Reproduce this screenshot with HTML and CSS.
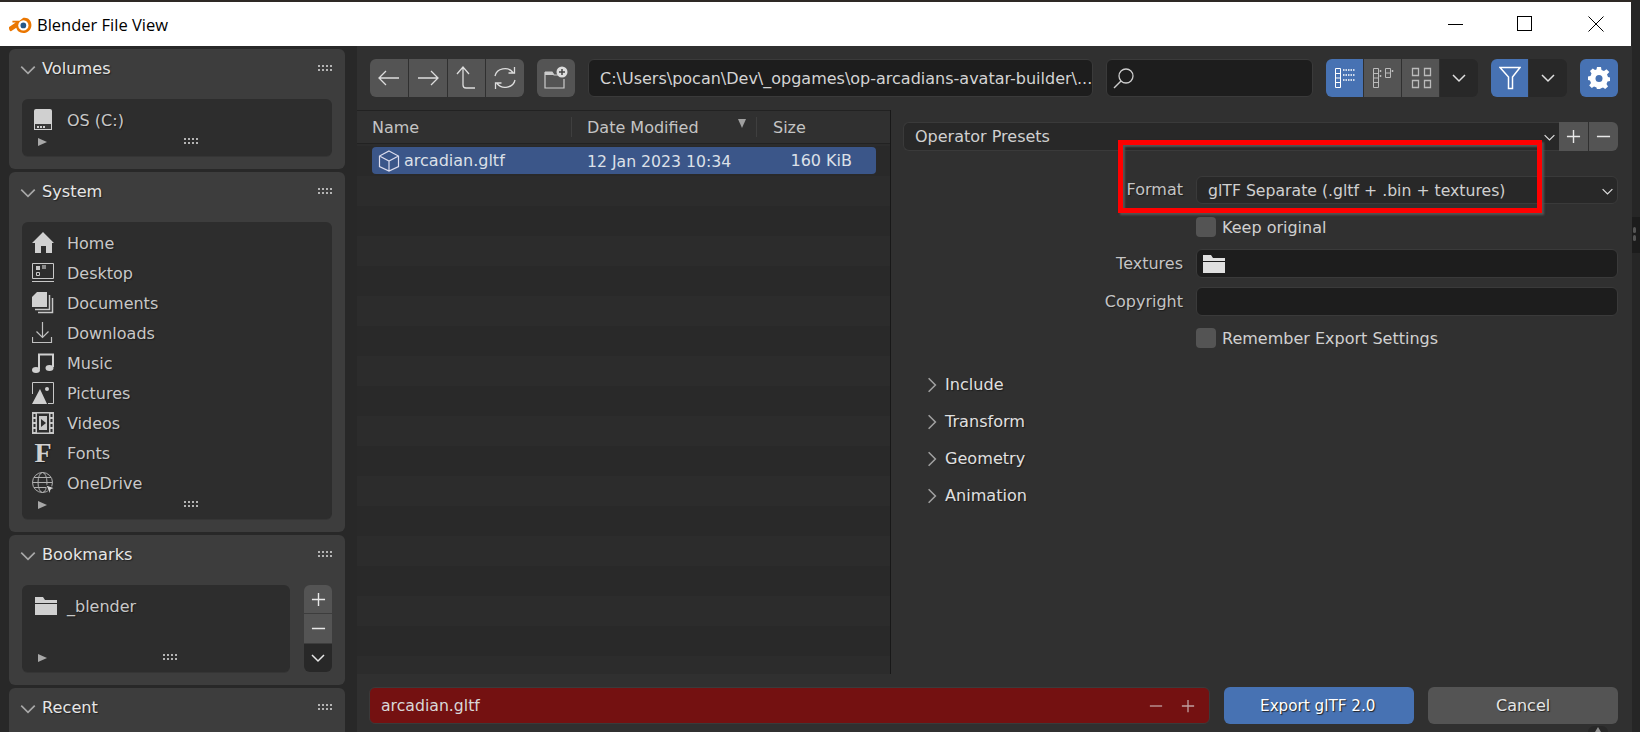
FILE: index.html
```html
<!DOCTYPE html>
<html lang="en">
<head>
	<meta charset="UTF-8">
	<title>Blender File View</title>
	<link rel="stylesheet" href="styles.css">
</head>
<body>
	<svg class="defs" width="0" height="0">
		<symbol id="chev-d" viewBox="0 0 16 16"><path d="M2 5l6 6 6-6" fill="none" stroke="currentColor" stroke-width="1.5"/></symbol>
		<symbol id="chev-r" viewBox="0 0 16 16"><path d="M5 2l6 6-6 6" fill="none" stroke="currentColor" stroke-width="1.4"/></symbol>
		<symbol id="plus" viewBox="0 0 16 16"><path d="M8 1v14M1 8h14" stroke="currentColor" stroke-width="1.5"/></symbol>
		<symbol id="minus" viewBox="0 0 16 16"><path d="M1 8h14" stroke="currentColor" stroke-width="1.5"/></symbol>
		<symbol id="folder" viewBox="0 0 22 18"><path d="M0 0h8l2 3h12v3H0zM0 7h22v11H0z" fill="currentColor"/></symbol>
	</svg>

	<div class="topstrip"></div>
	<header class="titlebar">
		<svg class="logo" viewBox="0 0 24 20">
			<path d="M0 12.5L7 8 3.5 7.8 3.5 6H11L15 3C19 2 23.5 5 23.5 10.5 23.5 15.5 19.5 19 15 19 11 19 8.2 16.5 7.6 13.5L2 17C.5 17.5-.5 14 0 12.5z" fill="#ea7600"/>
			<circle cx="15" cy="11" r="5.4" fill="#fff"/>
			<circle cx="15" cy="11" r="3" fill="#265787"/>
		</svg>
		<span class="title">Blender File View</span>
		<div class="win-btns">
			<div class="win-btn"><svg width="16" height="16"><path d="M0 8.5h15" stroke="#000"/></svg></div>
			<div class="win-btn"><svg class="win-max" width="16" height="16"><rect x=".5" y=".5" width="14" height="14" fill="none" stroke="#000"/></svg></div>
			<div class="win-btn"><svg width="16" height="16"><path d="M.5.5l15 15M15.5.5l-15 15" stroke="#000"/></svg></div>
		</div>
	</header>

	<div class="app">
		<aside class="sidebar">
			<section class="panel">
				<div class="panel-head"><svg class="chev"><use href="#chev-d"/></svg><span>Volumes</span><i class="grip"></i></div>
				<div class="list">
					<div class="place">
						<svg class="ico" viewBox="0 0 22 22"><g transform="translate(2 0)"><path d="M2 0h14a2 2 0 0 1 2 2v19H0V2a2 2 0 0 1 2-2z" fill="#d0d0d0"/><path d="M1 15h16v5H1z" fill="#3a3a3a"/><path d="M3 17h2v2H3zM6 17h2v2H6zM9 17h2v2H9z" fill="#d0d0d0"/></g></svg>
						OS (C:)
					</div>
					<div class="list-foot"><i class="tri"></i><i class="grip"></i></div>
				</div>
			</section>

			<section class="panel">
				<div class="panel-head"><svg class="chev"><use href="#chev-d"/></svg><span>System</span><i class="grip"></i></div>
				<div class="list">
					<div class="place">
						<svg class="ico" viewBox="0 0 22 22"><path d="M11 0l11 11h-2v10h-6v-7H9v7H3V11H0z" fill="#d0d0d0"/></svg>
						Home
					</div>
					<div class="place">
						<svg class="ico" viewBox="0 0 22 22"><path d="M.5 1.500h21v15H.5zM0 19.500h22" fill="none" stroke="#c8c8c8"/><path d="M4 4h4v4H4z" fill="#c8c8c8"/><path d="M10 3h4v4h-4z" fill="#8a8a8a"/><path d="M4.500 10.500h3v3h-3z" fill="none" stroke="#c8c8c8"/></svg>
						Desktop
					</div>
					<div class="place">
						<svg class="ico" viewBox="0 0 22 22"><path d="M5 0h10v15H0V5z" fill="#d0d0d0"/><path d="M17.500 3v14.500H3M20.500 6v14.500H6" fill="none" stroke="#c8c8c8" stroke-width="1.500"/></svg>
						Documents
					</div>
					<div class="place">
						<svg class="ico" viewBox="0 0 22 22"><path d="M10.500 0v15M4.500 9.500l6 6 6-6M.5 15v5.500h19V15" fill="none" stroke="#c0c0c0" stroke-width="1.200"/></svg>
						Downloads
					</div>
					<div class="place">
						<svg class="ico" viewBox="0 0 22 22"><path d="M7 17V2.500h14V15" fill="none" stroke="#d0d0d0" stroke-width="2"/><ellipse cx="4" cy="18" rx="4" ry="3" fill="#d0d0d0"/><ellipse cx="17.500" cy="16" rx="4" ry="3" fill="#d0d0d0"/></svg>
						Music
					</div>
					<div class="place">
						<svg class="ico" viewBox="0 0 22 22"><path d="M.5 12V.5h21v21H16" fill="none" stroke="#c8c8c8"/><path d="M8 7l7 15H0z" fill="#d0d0d0"/><circle cx="15" cy="7" r="2" fill="#d0d0d0"/></svg>
						Pictures
					</div>
					<div class="place">
						<svg class="ico" viewBox="0 0 22 22"><path d="M0 0h22v22H0z" fill="#c8c8c8"/><path d="M5 1.500h12v19H5z" fill="#2d2d2d"/><path d="M1.500 2h2v3h-2zM1.500 7h2v3h-2zM1.500 12h2v3h-2zM1.500 17h2v3h-2zM18.500 2h2v3h-2zM18.500 7h2v3h-2zM18.500 12h2v3h-2zM18.500 17h2v3h-2z" fill="#2d2d2d"/><path d="M7 4h8v14H7z" fill="#c8c8c8"/><path d="M9 7l5 4-5 4z" fill="#2d2d2d"/></svg>
						Videos
					</div>
					<div class="place">
						<span class="font-ico">F</span>
						Fonts
					</div>
					<div class="place">
						<svg class="ico" viewBox="0 0 22 22"><g fill="none" stroke="#b0b0b0"><circle cx="10.500" cy="10.500" r="10"/><ellipse cx="10.500" cy="10.500" rx="4.500" ry="10"/><path d="M.5 10.500h20M2 5.500h17M2 15.500h17"/></g><path d="M14 13l9 3-4 1.500-1.500 4.500z" fill="#d0d0d0" stroke="#2d2d2d"/></svg>
						OneDrive
					</div>
					<div class="list-foot"><i class="tri"></i><i class="grip"></i></div>
				</div>
			</section>

			<section class="panel">
				<div class="panel-head"><svg class="chev"><use href="#chev-d"/></svg><span>Bookmarks</span><i class="grip"></i></div>
				<div class="bookmarks">
					<div class="list">
						<div class="place">
							<svg class="ico bm-ico"><use href="#folder"/></svg>
							_blender
						</div>
						<div class="place"></div>
						<div class="list-foot"><i class="tri"></i><i class="grip"></i></div>
					</div>
					<div class="side-btns">
						<div class="side-btn"><svg width="15" height="15"><use href="#plus"/></svg></div>
						<div class="side-btn"><svg width="15" height="15"><use href="#minus"/></svg></div>
						<div class="side-btn side-btn-dark"><svg width="16" height="16"><use href="#chev-d"/></svg></div>
					</div>
				</div>
			</section>

			<section class="panel">
				<div class="panel-head"><svg class="chev"><use href="#chev-d"/></svg><span>Recent</span><i class="grip"></i></div>
			</section>
		</aside>

		<main class="main">
			<div class="toolbar">
				<div class="btn-group">
					<div class="tool tool-nav"><svg width="22" height="22" viewBox="0 0 22 22"><path d="M21 11H1M8 4l-7 7 7 7" fill="none" stroke="#ddd" stroke-width="1.300"/></svg></div>
					<div class="tool tool-nav"><svg width="22" height="22" viewBox="0 0 22 22"><path d="M1 11h20M14 4l7 7-7 7" fill="none" stroke="#ddd" stroke-width="1.300"/></svg></div>
					<div class="tool tool-nav"><svg width="22" height="24" viewBox="0 0 22 24"><path d="M20 22h-9a3 3 0 0 1-3-3V2M2 8l6-7 6 7" fill="none" stroke="#ddd" stroke-width="1.300"/></svg></div>
					<div class="tool tool-nav"><svg width="24" height="24" viewBox="0 0 24 24"><path d="M2 10A10 9 0 0 1 20 6.500M22 14A10 9 0 0 1 4 17.500M21.500 1v6h-6M2.500 23v-6h6" fill="none" stroke="#ddd" stroke-width="1.300"/></svg></div>
				</div>
				<div class="tool tool-solo"><svg width="24" height="24" viewBox="0 0 24 24"><path d="M1 6h7l2 3h6M1 6v16h19V13" fill="none" stroke="#ccc" stroke-width="1.200"/><path d="M1 6h7l2 3H1z" fill="#ccc"/><circle cx="18" cy="6" r="5.500" fill="#ddd"/><path d="M18 3v6M15 6h6" stroke="#444" stroke-width="1.500"/></svg></div>
				<div class="field path">C:\Users\pocan\Dev\_opgames\op-arcadians-avatar-builder\...</div>
				<div class="field search"><svg width="22" height="22" viewBox="0 0 22 22"><circle cx="13" cy="9" r="7" fill="none" stroke="#ccc" stroke-width="1.300"/><path d="M8 14l-7 7" stroke="#ccc" stroke-width="1.500"/></svg></div>
				<div class="btn-group">
					<div class="tool tool-blue"><svg width="22" height="22" viewBox="0 0 22 22"><path d="M1.500 1.500h5v19h-5zM1.500 6.500h5M1.500 11h5M1.500 15.500h5" fill="none" stroke="#fff"/><path d="M9 3h12M9 8h12M9 13h12" stroke="#fff" stroke-width="1.500" stroke-dasharray="1.500 1"/></svg></div>
					<div class="tool"><svg width="22" height="22" viewBox="0 0 22 22"><path d="M1.500 1.500h5v19h-5zM1.500 6.500h5M1.500 11h5M1.500 15.500h5M13.500 1.500h5v9h-5zM13.500 6h5" fill="none" stroke="#bbb"/><path d="M8.500 3v2M8.500 8v2M20.500 3v2" stroke="#bbb" stroke-width="1.500"/></svg></div>
					<div class="tool"><svg width="22" height="22" viewBox="0 0 22 22"><path d="M2.500 1.500h6v7h-6zM14.500 1.500h6v7h-6zM2.500 13.500h6v7h-6zM14.500 13.500h6v7h-6z" fill="none" stroke="#bbb" stroke-width="1.300"/></svg></div>
					<div class="tool tool-dark"><svg width="16" height="16"><use href="#chev-d"/></svg></div>
				</div>
				<div class="btn-group">
					<div class="tool tool-blue"><svg width="22" height="24" viewBox="0 0 22 24"><path d="M1 1.500h20l-7.500 9.500v11.500H9.500V11z" fill="none" stroke="#fff" stroke-width="1.500"/></svg></div>
					<div class="tool tool-dark"><svg width="16" height="16"><use href="#chev-d"/></svg></div>
				</div>
				<div class="tool tool-blue tool-solo tool-gear"><svg width="22" height="22" viewBox="0 0 22 22"><path d="M9 0h4l.5 3 2.500 1 2.500-1.800 2.800 2.800L19 7.500 20 10l2 .5v3.500L19.500 14.500l-1 2.500 1.500 2.500-2.800 2.500-2.200-1.500-2.500 1-.5 1H9l-.5-2-2.500-1L3.800 21 1.200 18.500 3 16 2 13.500 0 13V9.500l2.500-.5L3.500 6.500 2 4l2.800-2.500L7 3l1.500-.5z" fill="#fff"/><circle cx="11" cy="11.500" r="3.500" fill="#4772b3"/></svg></div>
			</div>

			<div class="content">
				<div class="files">
					<div class="file-head">
						<span class="col-name">Name</span>
						<span class="col-date">Date Modified<i class="tri-down"></i></span>
						<span class="col-size">Size</span>
					</div>
					<div class="file-rows">
						<div class="file selected">
							<span class="col-name"><svg width="22" height="22" viewBox="0 0 22 22"><path d="M11 1l9.500 5v10.500L11 21l-9.500-4.500V6zM1.500 6l9.500 5 9.500-5M11 11v10" fill="none" stroke="#dde" stroke-width="1.200"/></svg>arcadian.gltf</span>
							<span class="col-date">12 Jan 2023 10:34</span>
							<span class="col-size">160 KiB</span>
						</div>
					</div>
				</div>

				<div class="props">
					<div class="presets">
						<div class="select preset-field">Operator Presets<svg class="sel-chev"><use href="#chev-d"/></svg></div>
						<div class="pair">
							<div class="pair-btn"><svg width="15" height="15"><use href="#plus"/></svg></div>
							<div class="pair-btn"><svg width="15" height="15"><use href="#minus"/></svg></div>
						</div>
					</div>
					<div class="form">
						<label class="row-label">Format</label>
						<div class="select select-format">glTF Separate (.gltf + .bin + textures)<svg class="sel-chev"><use href="#chev-d"/></svg></div>
						<span></span>
						<div class="check"><i></i>Keep original</div>
						<label class="row-label row-label-low">Textures</label>
						<div class="input"><svg width="22" height="18"><use href="#folder"/></svg></div>
						<label class="row-label row-label-low">Copyright</label>
						<div class="input"></div>
						<span></span>
						<div class="check check-last"><i></i>Remember Export Settings</div>
					</div>
					<ul class="subpanels">
						<li><svg width="18" height="18"><use href="#chev-r"/></svg>Include</li>
						<li><svg width="18" height="18"><use href="#chev-r"/></svg>Transform</li>
						<li><svg width="18" height="18"><use href="#chev-r"/></svg>Geometry</li>
						<li><svg width="18" height="18"><use href="#chev-r"/></svg>Animation</li>
					</ul>
				</div>
			</div>

			<div class="footer">
				<div class="name-field">arcadian.gltf
					<svg class="nf-minus" width="14" height="14"><use href="#minus"/></svg>
					<svg width="14" height="14"><use href="#plus"/></svg>
				</div>
				<div class="action action-blue">Export glTF 2.0</div>
				<div class="action">Cancel</div>
			</div>

			<div class="redbox"></div>
			<div class="corner-tab"><i></i></div>
		</main>
	</div>
	<div class="edge-scrap"><i></i><i></i></div>
</body>
</html>
```

FILE: styles.css
```css
*{margin: 0;padding: 0;box-sizing: border-box;}
ul{list-style: none;}
i{display: block;}
html,body{width: 1640px;height: 732px;overflow: hidden;}
body{background: #262626;font-family: 'DejaVu Sans', sans-serif;font-size: 16px;color: #d0d0d0;position: relative;}
.defs{position: absolute;}

.topstrip{width: 1632px;height: 2px;background: #2e2925;}
.titlebar{width: 1631px;height: 44px;background: #fff;display: flex;align-items: center;padding-left: 9px;color: #000;}
.logo{width: 23px;height: 19px;margin-right: 5px;margin-top: 1px;}
.title{font-family: 'Open Sans', sans-serif;font-size: 16.5px;}
.win-btns{display: flex;margin-left: auto;}
.win-btn{width: 70px;height: 44px;display: flex;align-items: center;justify-content: center;}
.win-max{margin-right: 2px;}

.app{display: flex;width: 1632px;height: 686px;}

/* left column */
.sidebar{width: 357px;height: 686px;background: #282828;padding: 3px 12px 0 9px;display: flex;flex-direction: column;gap: 3px;overflow: hidden;flex: none;}
.panel{background: #3d3d3d;border-radius: 6px;padding: 0 13px 13px;flex: none;}
.panel-head{height: 50px;display: flex;align-items: flex-start;padding-top: 8px;color: #e6e6e6;font-size: 16.2px;text-shadow: 1px 1px 1px #222;}
.panel-head span{margin-left: 5px;line-height: 24px;}
.panel-head .grip{margin: 8px -2px 0 auto;}
.chev{width: 18px;height: 18px;color: #a8a8a8;margin-top: 4px;margin-left: -3px;flex: none;}
.grip{width: 16px;height: 8px;background: radial-gradient(circle at 1px 1px, #b4b4b4 1px, transparent 1.2px) 0 0/4px 4px;flex: none;}
.list{background: #2d2d2d;border-radius: 6px;padding-top: 6px;box-shadow: 0 1px 0 #353535;}
.place{height: 30px;display: flex;align-items: center;padding-left: 10px;gap: 13px;color: #c8c8c8;font-size: 16px;text-shadow: 1px 1px 1px #1c1c1c;}
.ico{width: 22px;height: 22px;flex: none;}
.font-ico{width: 22px;text-align: center;font-family: 'Liberation Serif', serif;font-weight: bold;font-size: 28px;line-height: 22px;color: #d0d0d0;}
.bm-ico{width: 22px;height: 18px;color: #d0d0d0;margin-left: 3px;margin-right: -3px;}
.list-foot{height: 21px;display: flex;align-items: flex-start;padding: 3px 0 0 16px;}
.list-foot .grip{margin: 0 auto;position: relative;left: 2px;}
.tri{width: 0;height: 0;border-left: 9px solid #a8a8a8;border-top: 4px solid transparent;border-bottom: 4px solid transparent;flex: none;}
.bookmarks{display: flex;justify-content: space-between;}
.bookmarks .list{width: 268px;}
.side-btns{width: 28px;display: flex;flex-direction: column;gap: 1px;border-radius: 6px;overflow: hidden;}
.side-btn{flex: 1;background: #545454;display: flex;align-items: center;justify-content: center;color: #e8e8e8;}
.side-btn-dark{background: #282828;}

/* right side */
.main{flex: 1;min-width: 0;background: #303030;display: flex;flex-direction: column;position: relative;}
.toolbar{height: 64px;display: flex;padding: 13px 0 0 13px;gap: 13px;align-items: flex-start;}
.btn-group{display: flex;height: 38px;border-radius: 6px;overflow: hidden;gap: 1px;flex: none;}
.tool{width: 37px;height: 38px;background: #545454;display: flex;align-items: center;justify-content: center;color: #e0e0e0;flex: none;}
.tool-nav{width: 37.75px;}
.tool-solo{border-radius: 6px;width: 38px;}
.tool-blue{background: #4772b3;}
.tool-dark{background: #282828;width: 38px;}
.tool-gear{width: 38px;}
.field{height: 38px;background: #1d1d1d;border: 1px solid #3a3a3a;border-radius: 6px;display: flex;align-items: center;color: #d4d4d4;white-space: nowrap;overflow: hidden;flex: none;}
.path{width: 505px;padding-left: 11px;}
.search{width: 207px;padding-left: 6px;}

.content{flex: 1;display: flex;min-height: 0;}
.files{width: 534px;background: #282828;border-right: 1px solid #181818;display: flex;flex-direction: column;flex: none;}
.file-head{height: 34px;background: #303030;border-top: 1px solid #222;border-bottom: 1px solid #222;display: flex;align-items: center;color: #c4c4c4;}
.file-rows{flex: 1;padding-top: 3px;background: repeating-linear-gradient(#292929 0 30px, #2c2c2c 30px 60px) 0 2px;}
.col-name{width: 214px;padding-left: 15px;display: flex;align-items: center;gap: 4px;}
.col-date{width: 186px;padding-left: 15px;position: relative;height: 20px;line-height: 21px;}
.col-size{padding-left: 16px;}
.file-head .col-date{border-left: 1px solid #3f3f3f;border-right: 1px solid #3f3f3f;line-height: 22px;}
.tri-down{position: absolute;top: 2px;right: 10px;width: 0;height: 0;border-top: 9px solid #a0a0a0;border-left: 4px solid transparent;border-right: 4px solid transparent;}
.file{width: 504px;height: 27px;margin-left: 15px;background: #3b5689;border-radius: 4px;display: flex;align-items: center;color: #dce0e8;}
.file .col-name{width: 200px;padding-left: 6px;}
.file .col-date{width: 180px;padding-left: 15px;font-size: 15.7px;}
.file .col-size{padding-left: 0;width: 100px;text-align: right;}

.props{flex: 1;padding: 12px 14px 0 12px;}
.presets{display: flex;height: 29px;}
.select{background: #282828;border: 1px solid #3a3a3a;border-radius: 6px;display: flex;align-items: center;padding-left: 11px;color: #d0d0d0;position: relative;}
.select-format{font-size: 15.7px;}
.sel-chev{width: 13px;height: 13px;position: absolute;right: 3px;top: 8px;color: #ddd;}
.preset-field{flex: 1;border-radius: 6px 0 0 6px;border-right: 0;}
.pair{display: flex;width: 59px;border-radius: 0 6px 6px 0;overflow: hidden;gap: 1px;}
.pair-btn{flex: 1;background: #545454;display: flex;align-items: center;justify-content: center;color: #e8e8e8;}
.form{display: grid;grid-template-columns: 280px 1fr;column-gap: 13px;margin-top: 25px;align-items: stretch;}
.form > .select{height: 28px;}
.row-label{text-align: right;line-height: 28px;color: #c4c4c4;text-shadow: 1px 1px 1px #1c1c1c;}
.row-label-low{line-height: 30px;}
.input{height: 29px;background: #1d1d1d;border: 1px solid #3a3a3a;border-radius: 6px;margin-bottom: 9px;padding: 5px 0 0 6px;color: #e0e0e0;}
.check{height: 20px;margin: 13px 0 12px;display: flex;align-items: center;gap: 6px;color: #d0d0d0;}
.check i{width: 20px;height: 20px;background: #545454;border-radius: 4px;}
.check-last{margin: 3px 0 0;}
.subpanels{margin-top: 18px;padding-left: 20px;}
.subpanels li{height: 37px;display: flex;align-items: center;gap: 4px;color: #e0e0e0;font-size: 16.1px;text-shadow: 1px 1px 1px #1c1c1c;}
.subpanels svg{color: #a0a0a0;}

.footer{height: 58px;display: flex;padding: 13px 14px 8px 12px;gap: 13px;}
.name-field{width: 842px;background: #741111;border: 1px solid #3a3a3a;border-radius: 6px;padding: 0 14px 0 11px;display: flex;align-items: center;color: #d8d8d8;font-size: 15.7px;}
.name-field svg{color: #c0a0a0;margin-left: 18px;}
.name-field .nf-minus{margin-left: auto;}
.action{width: 190px;background: #545454;border-radius: 6px;display: flex;align-items: center;justify-content: center;color: #e6e6e6;text-shadow: 1px 1px 1px #222;margin-left: 1px;}
.action-blue{background: #4772b3;color: #fff;font-size: 15.2px;padding-right: 3px;}

/* annotation drawn over the dialog */
.redbox{position: absolute;left: 761px;top: 94px;width: 424px;height: 73px;border: 5px solid #f00;box-shadow: 2px 2px 2px #555, inset 2px 2px 2px #555;}

/* bits that stick out past the dialog */
.corner-tab{position: absolute;left: 1231px;bottom: 0;width: 20px;height: 6px;background: #282828;border-radius: 6px 6px 0 0;display: flex;justify-content: center;padding-top: 1px;}
.corner-tab i{width: 0;height: 0;border-bottom: 5px solid #909090;border-left: 3px solid transparent;border-right: 3px solid transparent;}
.edge-scrap{position: absolute;left: 1632px;top: 217px;width: 8px;height: 36px;background: #1c1c1c;padding-top: 10px;}
.edge-scrap i{width: 3px;height: 6px;margin: 0 0 2px 1px;background: #555;border-radius: 2px;}
```
